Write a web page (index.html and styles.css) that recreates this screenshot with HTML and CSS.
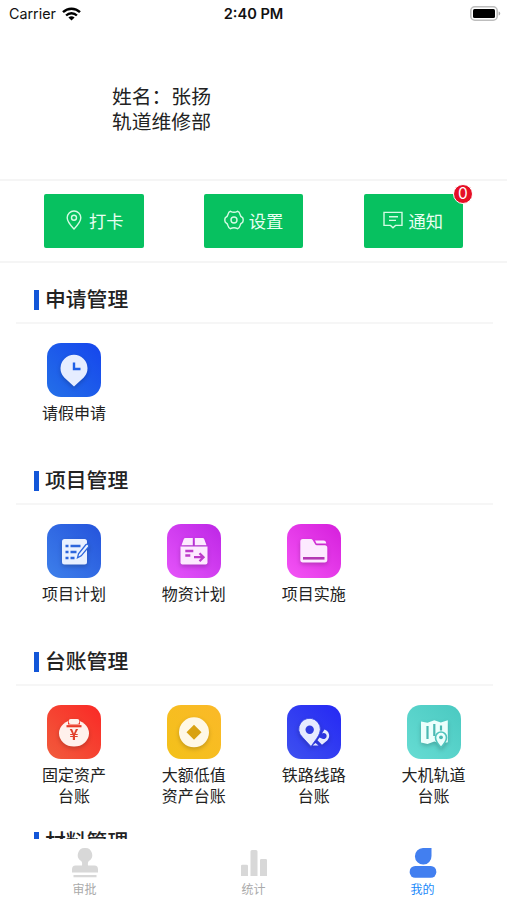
FILE: index.html
```html
<!DOCTYPE html>
<html lang="zh-CN">
<head>
    <meta charset="UTF-8">
    <meta name="viewport" content="width=device-width, initial-scale=1.0">
    <title>我的</title>
    <link rel="stylesheet" href="styles.css">
</head>
<body>
    <div class="app">
        <header class="status-bar">
            <div class="carrier">
                <span>Carrier</span>
                <svg width="19" height="14" viewBox="0 0 19 14" fill="none" stroke="#000" stroke-width="2.4">
                    <path d="M1 5.2a12.2 12.2 0 0 1 17 0"/>
                    <path d="M4.1 8.5a7.7 7.7 0 0 1 10.8 0"/>
                    <path d="M9.5 13.6L6.4 10.6a4.6 4.6 0 0 1 6.2 0z" fill="#000" stroke="none"/>
                </svg>
            </div>
            <div class="time">2:40 PM</div>
            <div class="battery">
                <svg width="31" height="15" viewBox="0 0 31 15">
                    <rect x=".8" y=".8" width="26.4" height="13.4" rx="4" fill="#fff" stroke="#bdbdbd" stroke-width="1.6"/>
                    <rect x="3" y="3" width="22" height="9" rx="1.5" fill="#000"/>
                    <path d="M28.6 5.5c2.2.7 2.2 3.3 0 4z" fill="#aaa"/>
                </svg>
            </div>
        </header>

        <div class="profile">
            <p>姓名：张扬</p>
            <p>轨道维修部</p>
        </div>

        <div class="actions">
            <button class="btn">
                <svg width="20" height="20" viewBox="0 0 20 20">
                    <path d="M10 19C7 15.8 3.2 12 3.2 7.8a6.8 6.8 0 0 1 13.6 0C16.8 12 13 15.8 10 19z"/>
                    <circle cx="10" cy="7.8" r="2.5"/>
                </svg>
                <span>打卡</span>
            </button>
            <button class="btn">
                <svg width="20" height="20" viewBox="0 0 20 20">
                    <path d="M6.5 1.3Q10 3.3 13.500 1.300Q15.500 1.800 16 4.300Q16.300 6.500 18.600 7.600Q19.800 10 18.600 12.400Q16.300 13.500 16 15.700Q15.500 18.200 13.500 18.700Q10 16.700 6.500 18.700Q4.500 18.200 4 15.700Q3.700 13.500 1.400 12.400Q.2 10 1.400 7.600Q3.700 6.500 4 4.300Q4.500 1.800 6.500 1.300z"/>
                    <circle cx="10" cy="10" r="3"/>
                </svg>
                <span>设置</span>
            </button>
            <button class="btn">
                <svg width="20" height="20" viewBox="0 0 20 20">
                    <path d="M1 2.400h18v13h-6.500L10 17.700l-2.500-2.300H1zM6 6.700h9M6 10.400h7"/>
                </svg>
                <span>通知</span>
                <i class="badge">0</i>
            </button>
        </div>

        <main class="content">
            <section class="section">
                <h2>申请管理</h2>
                <div class="grid">
                    <div class="item">
                        <div class="icon leave">
                            <svg width="54" height="54" viewBox="0 0 54 54">
                                <path d="M27 43.5L17.2 34.600a13.500 13.500 0 1 1 19.600 0z" fill="#e6edff"/>
                                <path d="M27 19.500v6.500h6.500" fill="none" stroke="#1d5fe6" stroke-width="2.400"/>
                            </svg>
                        </div>
                        <span>请假申请</span>
                    </div>
                </div>
            </section>

            <section class="section">
                <h2>项目管理</h2>
                <div class="grid">
                    <div class="item">
                        <div class="icon plan">
                            <svg width="54" height="54" viewBox="0 0 54 54">
                                <rect x="15" y="15" width="25" height="25.500" rx="2.500" fill="#e9f1ff"/>
                                <path d="M18.500 22h3M18.500 28h3M18.500 34h3M23.500 22h10M23.500 28h6M23.500 34h4" stroke="#2c66dc" stroke-width="2.300"/>
                                <path d="M30.500 33.800l1-4 7.500-9.300q1.300-1 2.300.3t.2 2.200l-7.300 8.800z" fill="#e9f1ff" stroke="#2c66dc" stroke-width="1.300"/>
                            </svg>
                        </div>
                        <span>项目计划</span>
                    </div>
                    <div class="item">
                        <div class="icon goods">
                            <svg width="54" height="54" viewBox="0 0 54 54" fill="#fdeaff">
                                <path d="M18.500 14h7.300v7.200H14.500l2.200-6q.4-1.200 1.800-1.200zM27.800 14h7.700q1.400 0 1.800 1.200l2.200 6H27.800z"/>
                                <path d="M13.500 22.500h27V38.500q0 2-2 2h-23q-2 0-2-2z"/>
                                <path d="M18.300 27h8M18.300 31.500h5M27 33.200h9M32.500 29.200l4 4-4 4" fill="none" stroke="#bd3cc9" stroke-width="2.300"/>
                            </svg>
                        </div>
                        <span>物资计划</span>
                    </div>
                    <div class="item">
                        <div class="icon work">
                            <svg width="54" height="54" viewBox="0 0 54 54" fill="#fdeaff">
                                <path d="M15.800 15h8q1.300 0 2 1.200l2.500 4.300q.5.800 1.500.8h8q2.500 0 2.500 2.500v12q0 2.700-2.700 2.700H16q-2.700 0-2.700-2.700V17.500q0-2.500 2.500-2.500z"/>
                                <path d="M28 16.500h8.500q2.500 0 2.700 3H29.500z"/>
                                <path d="M16 34.300h21.500" stroke="#b338b3" stroke-width="2.600"/>
                            </svg>
                        </div>
                        <span>项目实施</span>
                    </div>
                </div>
            </section>

            <section class="section">
                <h2>台账管理</h2>
                <div class="grid">
                    <div class="item">
                        <div class="icon asset">
                            <svg width="54" height="54" viewBox="0 0 54 54" fill="#fff1ec">
                                <ellipse cx="27" cy="28.300" rx="15" ry="13.200"/>
                                <path d="M19.500 21.200h15" stroke="#e93a27" stroke-width="2.200"/>
                                <path d="M21 14h12v5.500H21z" fill="#f13b2b"/>
                                <rect x="21.700" y="14" width="10.600" height="5" rx="2"/>
                                <text class="yen" x="27" y="35" text-anchor="middle">¥</text>
                            </svg>
                        </div>
                        <span>固定资产<br>台账</span>
                    </div>
                    <div class="item">
                        <div class="icon coin">
                            <svg width="54" height="54" viewBox="0 0 54 54">
                                <circle cx="27" cy="27.300" r="15" fill="#fff8e6"/>
                                <path d="M27 19.800l7.500 7.500-7.500 7.500-7.500-7.500z" fill="#d9a212"/>
                            </svg>
                        </div>
                        <span>大额低值<br>资产台账</span>
                    </div>
                    <div class="item">
                        <div class="icon rail">
                            <svg width="54" height="54" viewBox="0 0 54 54">
                                <path d="M37.500 24.500a6.600 6.600 0 0 1 2.700 11L35 39.800l-4.500-4.600 2-2.700 2.800 1.200a3 3 0 1 0-.3-5.200z" fill="#e6ebff"/>
                                <path d="M25.500 40.500l3-2.600 3 2.600z" fill="#e6ebff"/>
                                <path d="M24 41.500l-8.500-9.200a10.800 10.800 0 1 1 17-4q-.8 2.400-2.800 5.200z" fill="#e6ebff" stroke="#2d3ce8" stroke-width=".8"/>
                                <circle cx="22.700" cy="24.700" r="4.200" fill="#303ce0"/>
                            </svg>
                        </div>
                        <span>铁路线路<br>台账</span>
                    </div>
                    <div class="item">
                        <div class="icon track">
                            <svg width="54" height="54" viewBox="0 0 54 54">
                                <path d="M14 16.500l6.500 1.300 6.800-2.600 6.500 2.300 7-2.300v22l-7 1.300-6.500-2-6.800 2.500-6.500-1.500z" fill="#ebfffc"/>
                                <path d="M20.500 21v13M27.300 19v12M34 20.500v5" stroke="#4ab9b2" stroke-width="2.200"/>
                                <path d="M34 42.500q-5.500-6-5.500-10a5.500 5.500 0 0 1 11 0q0 4-5.500 10z" fill="#ebfffc" stroke="#4fc4bc" stroke-width="1.600"/>
                                <circle cx="34" cy="32.300" r="1.900" fill="#4ab9b2"/>
                            </svg>
                        </div>
                        <span>大机轨道<br>台账</span>
                    </div>
                </div>
            </section>

            <section class="section">
                <h2>材料管理</h2>
            </section>
        </main>

        <nav class="tabbar">
            <a class="tab">
                <svg width="28" height="30" viewBox="0 0 28 30">
                    <path d="M14 0a7 7 0 0 1 3.800 13q-1.300 1.200-.8 4.500h6.500q3.500 0 3.500 4v3H1v-3q0-4 3.500-4H11q.5-3.300-.8-4.500A7 7 0 0 1 14 0zM2.500 27h23v2.200h-23z"/>
                </svg>
                <span>审批</span>
            </a>
            <a class="tab">
                <svg width="28" height="30" viewBox="0 0 28 30">
                    <path d="M1 18q0-1.200 1.200-1.200h4.600Q8 16.800 8 18v10H1zM10.500 3.500q0-1.500 1.500-1.500h4q1.500 0 1.500 1.500V28h-7zM20 12.200q0-1.200 1.200-1.200h4.600q1.200 0 1.200 1.200V28h-7z"/>
                </svg>
                <span>统计</span>
            </a>
            <a class="tab active">
                <svg width="28" height="30" viewBox="0 0 28 30">
                    <path d="M14 0h8.500v8a8.300 8.300 0 1 1-8.500-8z"/>
                    <rect x=".7" y="18" width="26.600" height="11.800" rx="5.500"/>
                </svg>
                <span>我的</span>
            </a>
        </nav>
    </div>
</body>
</html>
```

FILE: styles.css
```css
* {
    box-sizing: border-box;
}
body {
    margin: 0;
    background-color: #fff;
    color: #222;
    font-family: 'Noto Sans CJK SC', sans-serif;
}
.app {
    display: flex;
    flex-direction: column;
    height: 900px;
    overflow: hidden;
}
.status-bar {
    display: grid;
    grid-template-columns: 1fr auto 1fr;
    align-items: center;
    flex: none;
    height: 27px;
    padding: 0 6px 0 9px;
    font-family: Inter, sans-serif;
    font-size: 14.3px;
    color: #111;
}
.carrier {
    display: flex;
    align-items: center;
    gap: 6px;
}
.time {
    margin-right: 3px;
    font-size: 14.6px;
    font-weight: 600;
}
.battery {
    display: flex;
    justify-content: flex-end;
}
.profile {
    flex: none;
    height: 154px;
    padding: 57px 0 0 112px;
    border-bottom: 2px solid #f5f5f5;
    font-size: 19.8px;
    line-height: 24.5px;
}
.profile p {
    margin: 0;
}
.actions {
    display: flex;
    justify-content: space-between;
    flex: none;
    height: 82px;
    padding: 13px 44px 0;
    border-bottom: 2px solid #f5f5f5;
}
.btn {
    position: relative;
    display: flex;
    align-items: center;
    justify-content: center;
    gap: 5px;
    width: 99.5px;
    height: 54px;
    padding: 0 0 2px;
    border: 0;
    border-radius: 2px;
    background-color: #07c160;
    color: #e9fff2;
    font-family: inherit;
    font-size: 17.3px;
}
.btn svg {
    fill: none;
    stroke: #d5fbe4;
    stroke-width: 1.4;
}
.badge {
    position: absolute;
    top: -10px;
    right: -10px;
    width: 20px;
    height: 20px;
    border: 1px solid #fff;
    border-radius: 50%;
    background-color: #e60f26;
    color: #fff;
    font: normal 15.5px/18px Inter, sans-serif;
    text-align: center;
}
.content {
    flex: 1;
    min-height: 0;
    padding: 13px 14px 0 16px;
    overflow: hidden;
}
.section {
    height: 180.8px;
}
.section h2 {
    display: flex;
    align-items: center;
    gap: 6px;
    height: 48px;
    margin: 0;
    padding: 0 0 2px 18px;
    border-bottom: 2px solid #f6f6f6;
    font-size: 20.8px;
    font-weight: 500;
}
.section h2::before {
    content: '';
    width: 5px;
    height: 20px;
    margin-top: 4px;
    background-color: #1256d8;
}
.grid {
    display: grid;
    grid-template-columns: repeat(4, 119.9px);
    margin-left: -2px;
    padding-top: 19px;
}
.item {
    display: flex;
    flex-direction: column;
    align-items: center;
    gap: 5px;
    font-size: 16px;
    line-height: 21px;
    text-align: center;
}
.icon {
    width: 54px;
    height: 54px;
    border-radius: 14px;
}
.icon svg {
    display: block;
    filter: drop-shadow(0 2px 2px rgba(0, 0, 0, .2));
}
.leave {
    background: linear-gradient(45deg, #2470e8, #1545ed);
}
.plan {
    background: linear-gradient(45deg, #3e80ea, #2453dc);
}
.goods {
    background: linear-gradient(45deg, #e555fa, #bd26e6);
}
.work {
    background: linear-gradient(45deg, #f455f5, #d51fdc);
}
.asset {
    background: linear-gradient(45deg, #f15c3c, #fa2926);
}
.coin {
    background: linear-gradient(45deg, #f3c11a, #fbb928);
}
.rail {
    background: linear-gradient(45deg, #3e51ef, #2528f4);
}
.track {
    background: linear-gradient(45deg, #66dcd3, #4ac9c1);
}
.yen {
    fill: #e2402c;
    font: bold 15px 'Noto Sans CJK SC', sans-serif;
}
.tabbar {
    display: flex;
    flex: none;
    height: 61px;
    background-color: #fff;
}
.tab {
    display: flex;
    flex: 1;
    flex-direction: column;
    align-items: center;
    gap: 3px;
    padding-top: 9px;
    color: #aaa;
    font-size: 12px;
    line-height: 16px;
}
.tab svg {
    fill: #d8d8d8;
}
.tab.active {
    color: #1989fa;
}
.tab.active svg {
    fill: #427ff0;
}
```
